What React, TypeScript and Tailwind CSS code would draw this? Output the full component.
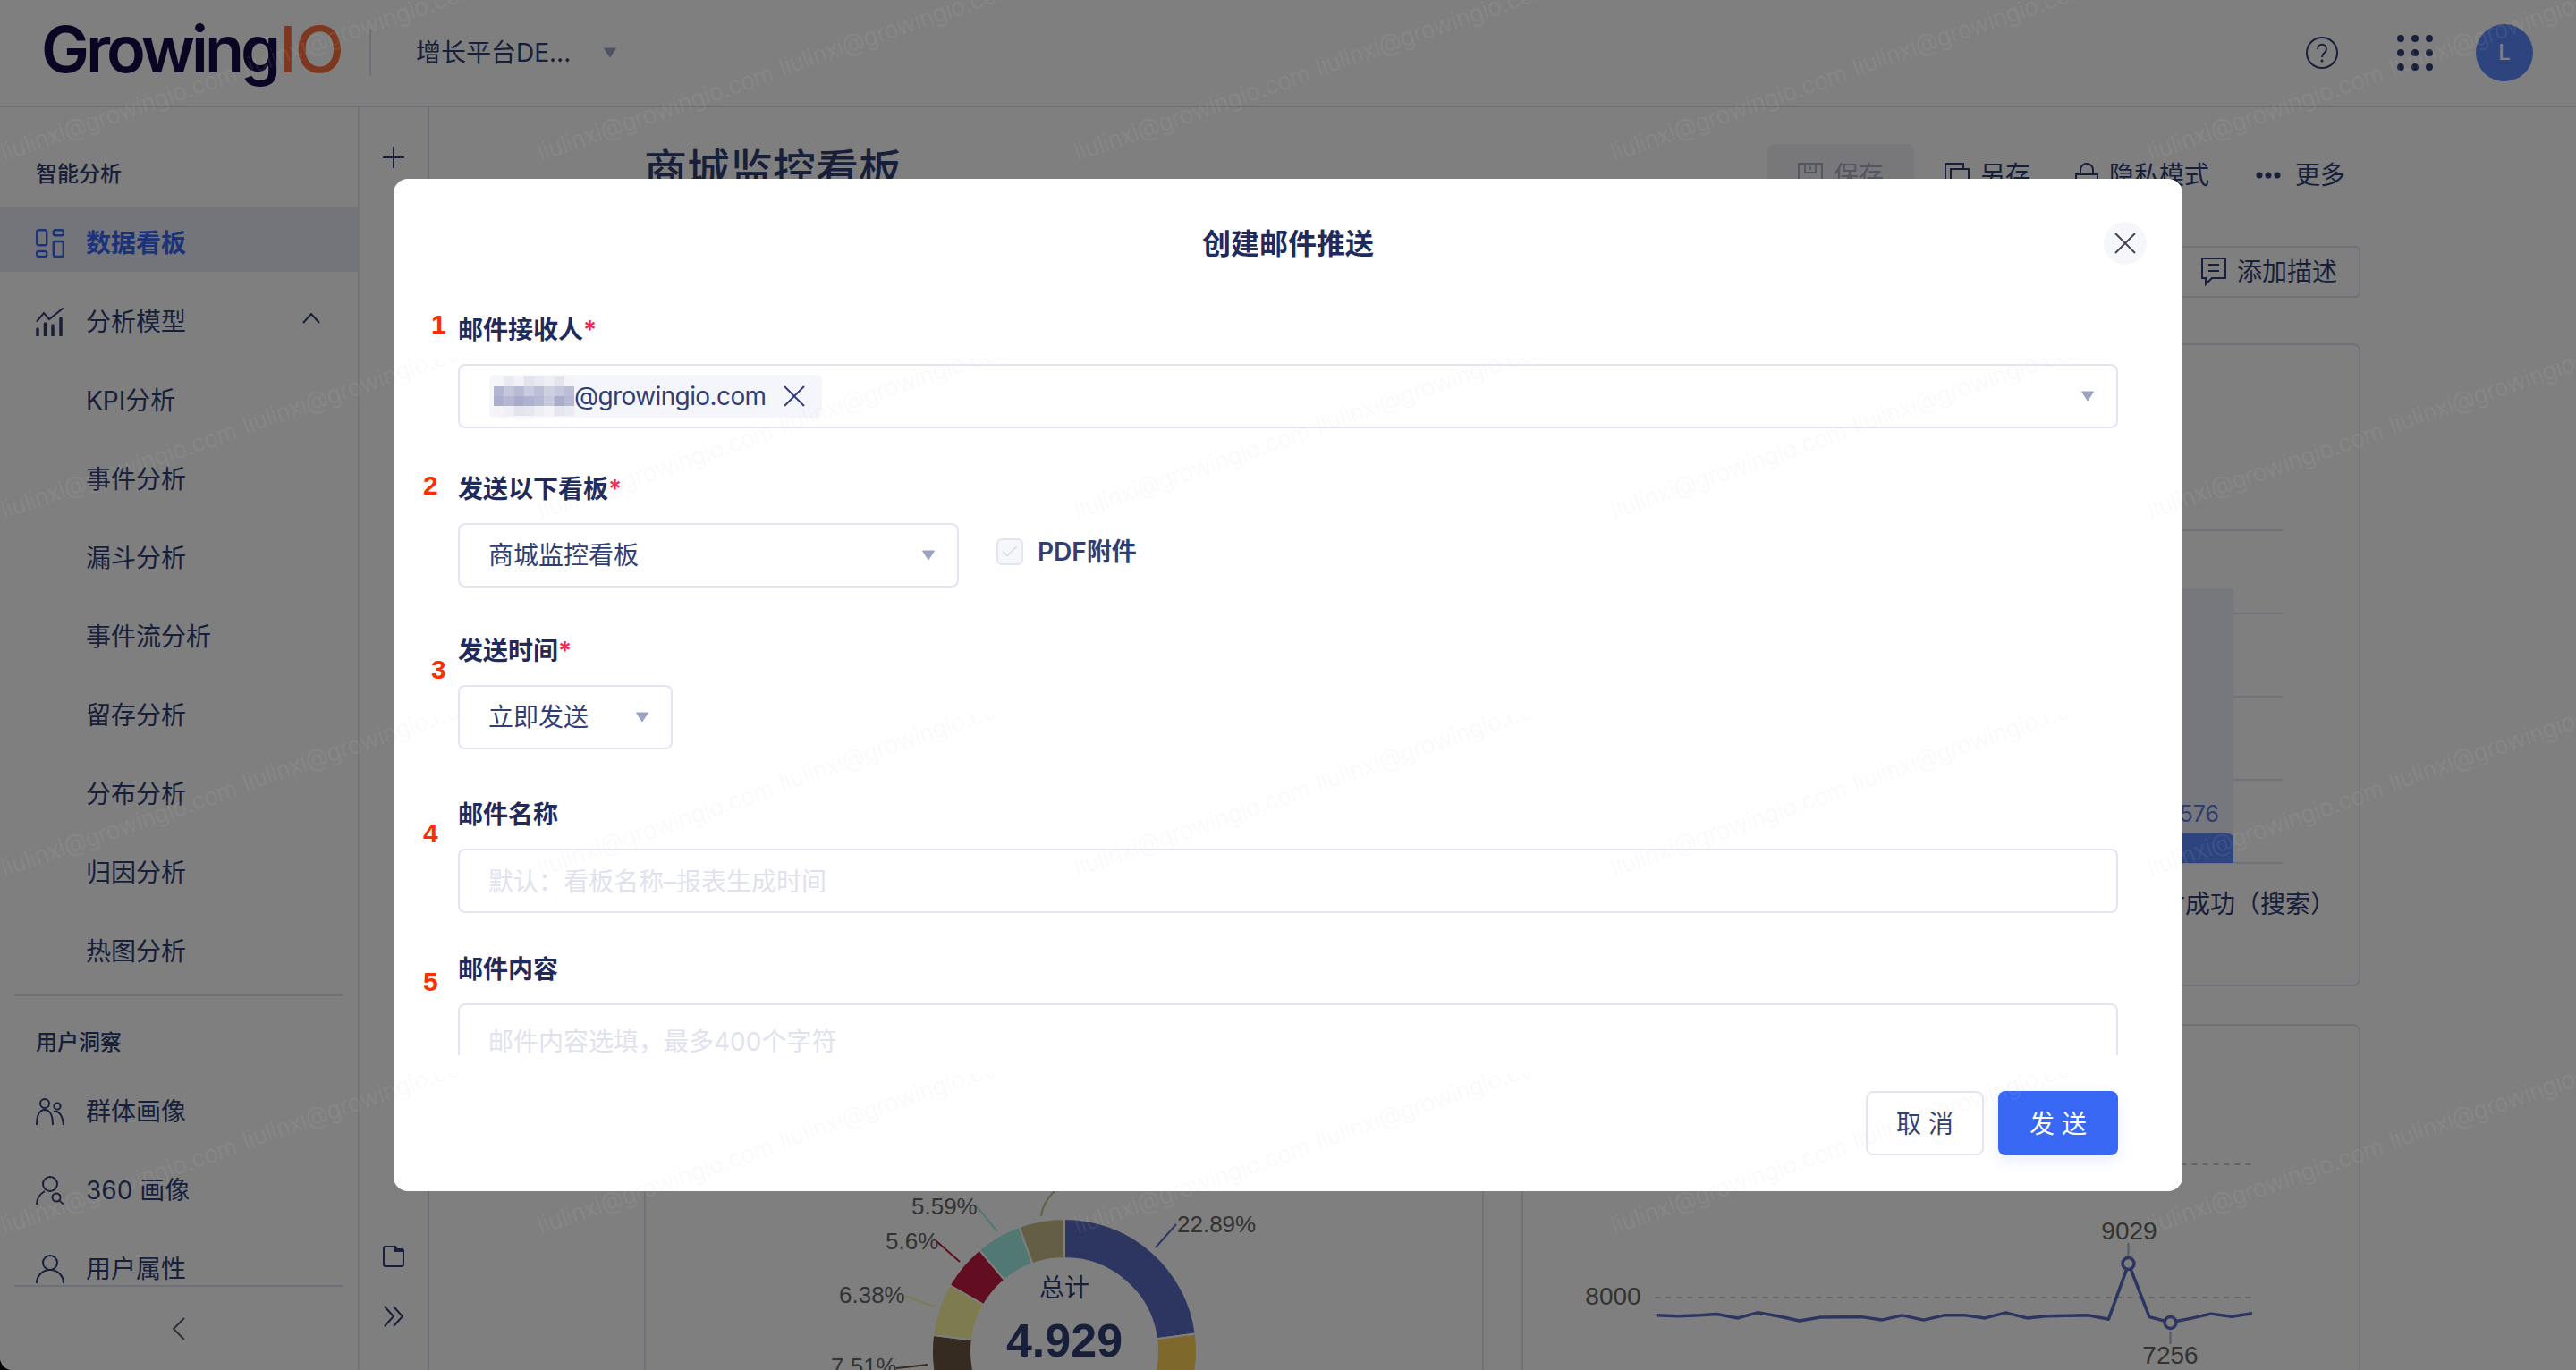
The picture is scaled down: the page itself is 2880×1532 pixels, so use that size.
import { Check } from "lucide-react";
import type { ReactNode } from "react";

const NAVY = "#313e75";

function Caret({ className = "" }: { className?: string }) {
  return (
    <svg width="16" height="12" viewBox="0 0 16 12" className={className}>
      <path d="M1.5 1h13L8 11z" fill="#9aa3c4" stroke="#9aa3c4" strokeLinejoin="round" />
    </svg>
  );
}

function Cross({ color = NAVY }: { color?: string }) {
  return (
    <svg width="24" height="24" viewBox="0 0 24 24" fill="none" stroke={color} strokeWidth="2">
      <path d="M1 1l22 22M23 1L1 23" />
    </svg>
  );
}

function DashIcon() {
  return (
    <svg width="32" height="32" viewBox="0 0 32 32" fill="none" stroke="#3867f4" strokeWidth="2.4">
      <rect x="1.2" y="1.2" width="11" height="17" rx="2" />
      <rect x="1.2" y="25" width="11" height="6" rx="2" />
      <rect x="19.8" y="1.2" width="11" height="6" rx="2" />
      <rect x="19.8" y="14" width="11" height="17" rx="2" />
    </svg>
  );
}

function ModelIcon() {
  return (
    <svg width="32" height="32" viewBox="0 0 32 32" fill="none" stroke={NAVY} strokeWidth="3.5" strokeLinecap="round">
      <path d="M2 24v7M10.500 18v13M19 20v11M28 12v19" />
      <path d="M1.500 15L9 6l6 7L30 1" strokeWidth="2" />
    </svg>
  );
}

function GroupIcon() {
  return (
    <svg width="32" height="32" viewBox="0 0 32 32" fill="none" stroke={NAVY} strokeWidth="2">
      <circle cx="10" cy="7" r="5" />
      <circle cx="24" cy="10" r="3.600" />
      <path d="M1 31c0-10 3-17 9-17s9 7 9 17M20 16c6-2 10 5 11 15" />
    </svg>
  );
}

function PersonSearchIcon() {
  return (
    <svg width="32" height="32" viewBox="0 0 32 32" fill="none" stroke={NAVY} strokeWidth="2">
      <circle cx="16" cy="9" r="8" />
      <path d="M1 32c0-7 4-12 9-15" />
      <circle cx="23" cy="24" r="4.500" />
      <path d="M26.500 27.500L31 32" />
    </svg>
  );
}

function PersonIcon() {
  return (
    <svg width="32" height="32" viewBox="0 0 32 32" fill="none" stroke={NAVY} strokeWidth="2">
      <circle cx="16" cy="9" r="8" />
      <path d="M1 32c0-8 6-15 15-15s15 7 15 15" />
    </svg>
  );
}

function MenuRow({ label, icon, active, right }: { label: string; icon?: ReactNode; active?: boolean; right?: ReactNode }) {
  return (
    <div className={`mb-4 flex h-[72px] items-center pt-2 ${icon ? "pl-[40px]" : "pl-[96px]"} ${active ? "bg-[#e6ebf7]" : ""}`}>
      {icon && <span className="mr-[24px] flex w-[32px]">{icon}</span>}
      <span className={`text-[28px] leading-[40px] ${active ? "font-semibold text-[#3867f4]" : "text-[#313e75]"}`}>{label}</span>
      {right}
    </div>
  );
}

function Sidebar() {
  return (
    <aside className="flex w-[402px] shrink-0 flex-col border-r-2 border-[#e8e9f0]">
      <div className="flex-1 overflow-hidden pt-[55px]">
        <div className="mb-[17px] h-[40px] pl-[40px] text-[24px] leading-[40px] font-medium text-[#313e75]">智能分析</div>
        <MenuRow label="数据看板" icon={<DashIcon />} active />
        <MenuRow
          label="分析模型"
          icon={<ModelIcon />}
          right={
            <svg width="20" height="12" viewBox="0 0 20 12" fill="none" stroke={NAVY} strokeWidth="2" className="mb-2 ml-auto mr-[42px]">
              <path d="M1 11L10 1l9 10" />
            </svg>
          }
        />
        {["KPI分析", "事件分析", "漏斗分析", "事件流分析", "留存分析", "分布分析", "归因分析", "热图分析"].map((m) => (
          <MenuRow key={m} label={m} />
        ))}
        <div className="mx-4 h-[2px] bg-[#dfe1ee]" />
        <div className="mb-[17px] mt-[32px] h-[40px] pl-[40px] text-[24px] leading-[40px] font-medium text-[#313e75]">用户洞察</div>
        <MenuRow label="群体画像" icon={<GroupIcon />} />
        <MenuRow label="360 画像" icon={<PersonSearchIcon />} />
        <MenuRow label="用户属性" icon={<PersonIcon />} />
      </div>
      <div className="mx-4 flex h-[95px] shrink-0 items-center justify-center border-t-2 border-[#dfe1ee]">
        <svg width="16" height="26" viewBox="0 0 16 26" fill="none" stroke="#5c6070" strokeWidth="2">
          <path d="M14 1L2 13l12 12" />
        </svg>
      </div>
    </aside>
  );
}

function Rail() {
  return (
    <div className="flex w-[78px] shrink-0 flex-col items-center border-r-2 border-[#dfe1ee] pt-[44px]">
      <svg width="24" height="24" viewBox="0 0 24 24" fill="none" stroke={NAVY} strokeWidth="2">
        <path d="M12 0v24M0 12h24" />
      </svg>
      <svg width="24" height="24" viewBox="0 0 24 24" fill="none" stroke={NAVY} strokeWidth="2" className="mb-[43px] mt-auto">
        <path d="M1 3a2 2 0 012-2h11l2 3h5a2 2 0 012 2v15a2 2 0 01-2 2H3a2 2 0 01-2-2z" />
        <path d="M14 1v5h9" />
      </svg>
      <svg width="24" height="24" viewBox="0 0 24 24" fill="none" stroke={NAVY} strokeWidth="2" className="mb-[48px]">
        <path d="M2 1l10 11L2 23M12 1l10 11-10 11" />
      </svg>
    </div>
  );
}

function Header() {
  return (
    <header className="flex h-[120px] shrink-0 items-center border-b-2 border-[#dfe1ee]">
      <div className="flex w-[413px] items-center pb-[8px] pl-[46px] text-[72px] leading-[100px] font-semibold tracking-[-4px] text-[#140a44]">
        Growing
        <span className="ml-[2px] text-[72px] font-medium tracking-[-2px] text-[#ff7040]">IO</span>
      </div>
      <div className="h-[52px] w-[2px] bg-[#dfe1ee]" />
      <span className="ml-[50px] text-[28px] leading-[40px] text-[#313e75]">增长平台DE...</span>
      <Caret className="ml-[36px]" />
      <svg width="36" height="36" viewBox="0 0 36 36" fill="none" className="ml-auto mr-[66px]">
        <circle cx="18" cy="18" r="17" stroke={NAVY} strokeWidth="2" />
        <path d="M13 14c0-7 10-7 10 0 0 4-5 4-5 9" stroke={NAVY} strokeWidth="2" />
        <circle cx="18" cy="27" r="1.500" fill={NAVY} />
      </svg>
      <svg width="40" height="40" viewBox="0 0 40 40" fill={NAVY} className="mr-[48px]">
        {[4, 20, 36].map((y) => [4, 20, 36].map((x) => <circle key={`${x}-${y}`} cx={x} cy={y} r="4" />))}
      </svg>
      <div className="mr-[48px] flex h-[64px] w-[64px] items-center justify-center rounded-full bg-[#5b89ff] text-[24px] font-medium text-white">L</div>
    </header>
  );
}

function ToolButton({ icon, label, muted }: { icon: ReactNode; label: string; muted?: boolean }) {
  return (
    <div className={`flex h-[70px] items-center gap-[12px] text-[28px] leading-[40px] ${muted ? "rounded-lg bg-[#f0f1f6] px-[34px] text-[#a8adc2]" : "text-[#313e75]"}`}>
      {icon}
      {label}
    </div>
  );
}

function BarChart() {
  return (
    <svg viewBox="722 386 1915 715" className="h-full w-full">
      {[593, 686, 779, 872, 965].map((y) => (
        <line key={y} x1="2400" x2="2552" y1={y} y2={y} stroke="#dee4f0" strokeWidth="2" />
      ))}
      <rect x="2400" y="658" width="97" height="307" fill="#eef1fa" />
      <path d="M2400 932h91a6 6 0 016 6v27h-97z" fill="#5b89ff" />
      <text x="2481" y="919" textAnchor="end" fontSize="25" fill="#5b7be0">
        3576
      </text>
      <text x="2611" y="1021" textAnchor="end" fontSize="28" fill={NAVY}>
        支付成功（搜索）
      </text>
    </svg>
  );
}

// clockwise from 12 o'clock, in degrees
function arc(a0: number, a1: number) {
  const cx = 1190;
  const cy = 1511;
  const R = 148;
  const r = 104;
  const p = (rad: number, a: number) => {
    const t = (a * Math.PI) / 180;
    return `${cx + rad * Math.sin(t)} ${cy - rad * Math.cos(t)}`;
  };
  const large = a1 - a0 > 180 ? 1 : 0;
  return `M${p(R, a0)}A${R} ${R} 0 ${large} 1 ${p(R, a1)}L${p(r, a1)}A${r} ${r} 0 ${large} 0 ${p(r, a0)}Z`;
}

const slices = [
  { a0: 0, a1: 82.4, color: "#5a6ac2" },
  { a0: 82.4, a1: 170, color: "#ffd058" },
  { a0: 190, a1: 250, color: "#c69a58" },
  { a0: 250, a1: 277, color: "#6a5640" },
  { a0: 277, a1: 300, color: "#fff6a0" },
  { a0: 300, a1: 320, color: "#c61c40" },
  { a0: 320, a1: 340, color: "#a4f0e6" },
  { a0: 340, a1: 360, color: "#c8bc88" },
];

const pieLabels = [
  { x: 1316, y: 1378, text: "22.89%" },
  { x: 1019, y: 1358, text: "5.59%" },
  { x: 990, y: 1397, text: "5.6%" },
  { x: 938, y: 1457, text: "6.38%" },
  { x: 929, y: 1537, text: "7.51%" },
];

function Donut() {
  return (
    <svg viewBox="722 1147 934.500 416" className="h-full w-full">
      {slices.map((s) => (
        <path key={s.a0} d={arc(s.a0, s.a1)} fill={s.color} stroke="#ffffff" strokeWidth="2" />
      ))}
      <g fill="none" strokeWidth="2">
        <path d="M1315 1369l-23 26" stroke="#5a6ac2" />
        <path d="M1092 1349l23 28" stroke="#a4f0e6" />
        <path d="M1047 1388l26 23" stroke="#c61c40" />
        <path d="M1011 1449l34 12" stroke="#fff6a0" />
        <path d="M1002 1530l35-4" stroke="#6a5640" />
        <path d="M1179 1332c-8 8-14 16-15 28" stroke="#c8bc88" />
      </g>
      {pieLabels.map((l) => (
        <text key={l.text} x={l.x} y={l.y} fontSize="26" fill="#666666" fontFamily="'Liberation Sans', sans-serif">
          {l.text}
        </text>
      ))}
      <text x="1190" y="1450" textAnchor="middle" fontSize="28" fill={NAVY}>
        总计
      </text>
      <text x="1190" y="1517" textAnchor="middle" fontSize="52" fontWeight="700" fill={NAVY} fontFamily="'Liberation Sans', sans-serif">
        4.929
      </text>
    </svg>
  );
}

const linePts = [
  [-78, 1428], [-40, 1430], [0, 1428], [30, 1425], [68, 1435], [103, 1421], [140, 1430], [178, 1442], [215, 1433], [290, 1432],
  [325, 1440], [362, 1428], [400, 1440], [437, 1428], [475, 1428], [510, 1435], [547, 1421], [585, 1435], [620, 1430],
  [695, 1428], [731, 1438], [767, 1295], [804, 1432], [841, 1446], [878, 1436], [914, 1424], [951, 1431], [988, 1423],
]
  .map(([x, y]) => `${1900 + x / 1.6},${850 + y / 2.3}`)
  .join(" ");

function LineChart() {
  return (
    <svg viewBox="1702.500 1147 934.500 416" className="h-full w-full">
      <g stroke="#c8c8c8" strokeWidth="2" strokeDasharray="6 6">
        <line x1="1850" x2="2517" y1="1302" y2="1302" />
        <line x1="1850" x2="2517" y1="1451" y2="1451" />
      </g>
      <polyline points={linePts} fill="none" stroke="#5a6ac2" strokeWidth="3.500" strokeLinejoin="round" />
      <path d="M2379 1390v14M2426 1489v14" stroke="#aab0cc" strokeWidth="2" />
      <circle cx="2379" cy="1413" r="6.500" fill="#ffffff" stroke="#5a6ac2" strokeWidth="3.500" />
      <circle cx="2426" cy="1479" r="6.500" fill="#ffffff" stroke="#5a6ac2" strokeWidth="3.500" />
      <g fontSize="28" fill="#666666" fontFamily="'Liberation Sans', sans-serif" textAnchor="middle">
        <text x="1803" y="1459">8000</text>
        <text x="2380" y="1386">9029</text>
        <text x="2426" y="1525">7256</text>
      </g>
    </svg>
  );
}

function Main() {
  return (
    <main className="flex min-w-0 flex-1 flex-col overflow-hidden pl-[240px] pr-[241px]">
      <div className="mt-[35px] flex h-[70px] shrink-0 items-center">
        <h1 className="text-[48px] leading-[70px] font-medium text-[#313e75]">商城监控看板</h1>
        <div className="ml-auto mt-[12px] flex items-center pr-[17px]">
          <ToolButton
            muted
            label="保存"
            icon={
              <svg width="28" height="28" viewBox="0 0 28 28" fill="none" stroke="#a8adc2" strokeWidth="2">
                <path d="M1 1h26v26H1zM8 1v10h12V1M14 4v4" />
              </svg>
            }
          />
          <div className="ml-[34px]">
            <ToolButton
              label="另存"
              icon={
                <svg width="28" height="28" viewBox="0 0 28 28" fill="none" stroke={NAVY} strokeWidth="2">
                  <path d="M7 21H1V1h20v6M7 7h20v20H7z" />
                </svg>
              }
            />
          </div>
          <div className="ml-[50px]">
            <ToolButton
              label="隐私模式"
              icon={
                <svg width="26" height="28" viewBox="0 0 26 28" fill="none" stroke={NAVY} strokeWidth="2">
                  <path d="M6 13V8a7 7 0 0114 0v5M1 13h24v14H1z" />
                </svg>
              }
            />
          </div>
          <div className="ml-[52px]">
            <ToolButton
              label="更多"
              icon={
                <svg width="28" height="8" viewBox="0 0 28 8" fill={NAVY} className="mr-[4px]">
                  <circle cx="4" cy="4" r="3.500" />
                  <circle cx="14" cy="4" r="3.500" />
                  <circle cx="24" cy="4" r="3.500" />
                </svg>
              }
            />
          </div>
        </div>
      </div>
      <div className="mt-[50px] flex h-[58px] shrink-0 justify-end">
        <div className="flex w-[219px] items-center justify-end gap-[12px] rounded-md border-2 border-[#dee4f0] pr-[24px] text-[28px] leading-[40px] text-[#313e75]">
          <svg width="28" height="32" viewBox="0 0 28 32" fill="none" stroke={NAVY} strokeWidth="2">
            <path d="M1 1h26v22H12l-7 7v-7H1zM8 8h12M8 15h12" />
          </svg>
          添加描述
        </div>
      </div>
      <div className="mt-[51px] h-[719px] shrink-0 rounded-lg border-2 border-[#dee4f0]">
        <BarChart />
      </div>
      <div className="mt-[42px] grid h-[420px] shrink-0 grid-cols-2 gap-[42px]">
        <div className="rounded-lg border-2 border-[#dee4f0]">
          <Donut />
        </div>
        <div className="rounded-lg border-2 border-[#dee4f0]">
          <LineChart />
        </div>
      </div>
    </main>
  );
}

const BLUR = [
  ["#f6f6fa", "#eaeaf2", "#f1f1f7", "#e3e3ee", "#e9e9f2", "#eeeef5", "#e5e5ef", "#f3f3f8"],
  ["#b3b6d2", "#c4c6dc", "#b8bbd6", "#c9cbe0", "#bdbfd8", "#cdcfe2", "#c5c7dd", "#bcbed8"],
  ["#abaecd", "#b4b7d3", "#a8abcb", "#aeb1cf", "#b6b8d5", "#c6c8de", "#a9acca", "#b6b8d4"],
  ["#f3f3f8", "#f0f0f6", "#e4e4ef", "#e6e6f0", "#eeeef5", "#f3f3f8", "#e6e6f0", "#eaeaf3"],
];

function BlurPatch() {
  return (
    <svg width="90" height="44" viewBox="0 0 90 44" className="shrink-0">
      {BLUR.map((row, r) => row.map((c, i) => <rect key={`${r}-${i}`} x={i * 11.25} y={r * 11} width="11.500" height="11.500" fill={c} />))}
    </svg>
  );
}

function Field({ label, required, top, children }: { label: string; required?: boolean; top: number; children: ReactNode }) {
  return (
    <div style={{ marginTop: top }}>
      <div className="mb-[19px] h-[40px] pt-[1px] text-[28px] leading-[40px] font-semibold text-[#1f2b5c]">
        {label}
        {required && <span className="text-[#f5224d]">*</span>}
      </div>
      {children}
    </div>
  );
}

const boxClass = "flex h-[72px] items-center rounded-lg border-2 border-[#e3e6f2] text-[28px] leading-[40px] text-[#313e75]";

function Step({ n, className }: { n: number; className: string }) {
  return <span className={`absolute font-['Liberation_Sans',sans-serif] text-[30px] leading-[36px] font-bold text-[#ff2d00] ${className}`}>{n}</span>;
}

function Modal() {
  return (
    <div className="relative flex h-[1132px] w-[2000px] flex-col rounded-[16px] bg-white">
      <div className="relative flex h-[144px] shrink-0 items-center justify-center pt-[2px] text-[32px] leading-[48px] font-semibold text-[#1f2b5c]">
        创建邮件推送
        <button className="absolute right-[40px] top-[48px] flex h-[48px] w-[48px] items-center justify-center rounded-full bg-[#f6f7fb]">
          <Cross color="#4a4256" />
        </button>
      </div>
      <div className="h-[836px] shrink-0 overflow-hidden px-[72px] pt-[4px]">
        <Field label="邮件接收人" required top={0}>
          <div className={`${boxClass} pl-[33px] pr-[10px]`}>
            <div className="flex h-[48px] w-[372px] items-center rounded-md bg-[#f5f6fb] pl-[5px]">
              <BlurPatch />
              <span className="w-[214px] whitespace-nowrap tracking-[-0.6px]">@growingio.com</span>
              <span className="ml-[20px] flex">
                <Cross />
              </span>
            </div>
            <Caret className="ml-auto mr-[14px]" />
          </div>
        </Field>
        <Field label="发送以下看板" required top={47}>
          <div className="flex items-center">
            <div className={`${boxClass} w-[560px] pl-[32px] pr-[24px]`}>
              商城监控看板
              <Caret className="ml-auto" />
            </div>
            <div className="mb-[8px] ml-[42px] flex items-center">
              <span className="flex h-[30px] w-[30px] items-center justify-center rounded-md border-2 border-[#e3e6f2] bg-[#f6f7fb]">
                <Check size={22} strokeWidth={1.500} color="#d5d9e8" />
              </span>
              <span className="ml-[16px] text-[28px] leading-[40px] font-semibold text-[#313e75]">PDF附件</span>
            </div>
          </div>
        </Field>
        <Field label="发送时间" required top={50}>
          <div className={`${boxClass} w-[240px] pl-[32px] pr-[24px]`}>
            立即发送
            <Caret className="ml-auto" />
          </div>
        </Field>
        <Field label="邮件名称" top={52}>
          <div className={`${boxClass} pl-[32px] pt-[2px] !text-[#dfe2ee]`}>默认：看板名称–报表生成时间</div>
        </Field>
        <Field label="邮件内容" top={42}>
          <div className={`${boxClass} !h-[160px] !items-start pl-[32px] pt-[21px] !text-[#dfe2ee]`}>邮件内容选填，最多400个字符</div>
        </Field>
      </div>
      <div className="flex flex-1 items-start justify-end gap-[16px] px-[72px] pt-[40px] text-[28px] leading-[40px]">
        <button className="h-[72px] w-[132px] rounded-lg border-2 border-[#e3e6f2] pl-[8px] pt-[2px] tracking-[8px] text-[#313e75]">取消</button>
        <button className="h-[72px] w-[134px] rounded-lg bg-[#3867f4] pl-[8px] pt-[2px] tracking-[8px] text-white shadow-[0_6px_16px_rgba(56,103,244,0.12)]">发送</button>
      </div>
      <Step n={1} className="left-[42px] top-[145px]" />
      <Step n={2} className="left-[33px] top-[325px]" />
      <Step n={3} className="left-[42px] top-[531px]" />
      <Step n={4} className="left-[33px] top-[714px]" />
      <Step n={5} className="left-[33px] top-[880px]" />
    </div>
  );
}

function Watermark() {
  return (
    <svg className="pointer-events-none absolute inset-0 h-full w-full">
      <defs>
        <pattern id="wm" width="600" height="400" patternUnits="userSpaceOnUse">
          <g fontSize="27" fontWeight="300" fontFamily="Inter, sans-serif" fill="#c4c4c8" fillOpacity="0.11">
            <text transform="translate(5 180) rotate(-19)" textLength="277" lengthAdjust="spacingAndGlyphs">liulinxi@growingio.com</text>
            <text transform="translate(275 85) rotate(-19)" textLength="277" lengthAdjust="spacingAndGlyphs">liulinxi@growingio.com</text>
          </g>
        </pattern>
      </defs>
      <rect width="100%" height="100%" fill="url(#wm)" />
    </svg>
  );
}

export default function App() {
  return (
    <div className="h-[1532px] w-[2880px] overflow-hidden bg-black font-['Inter','Noto_Sans_CJK_SC',sans-serif]">
      <div className="relative h-full w-full overflow-hidden rounded-bl-[14px] bg-white">
        <div className="flex h-full flex-col">
          <Header />
          <div className="flex min-h-0 flex-1">
            <Sidebar />
            <Rail />
            <Main />
          </div>
        </div>
        <div className="absolute inset-0 flex justify-center bg-black/50 pt-[200px]">
          <Modal />
        </div>
        <Watermark />
      </div>
    </div>
  );
}
